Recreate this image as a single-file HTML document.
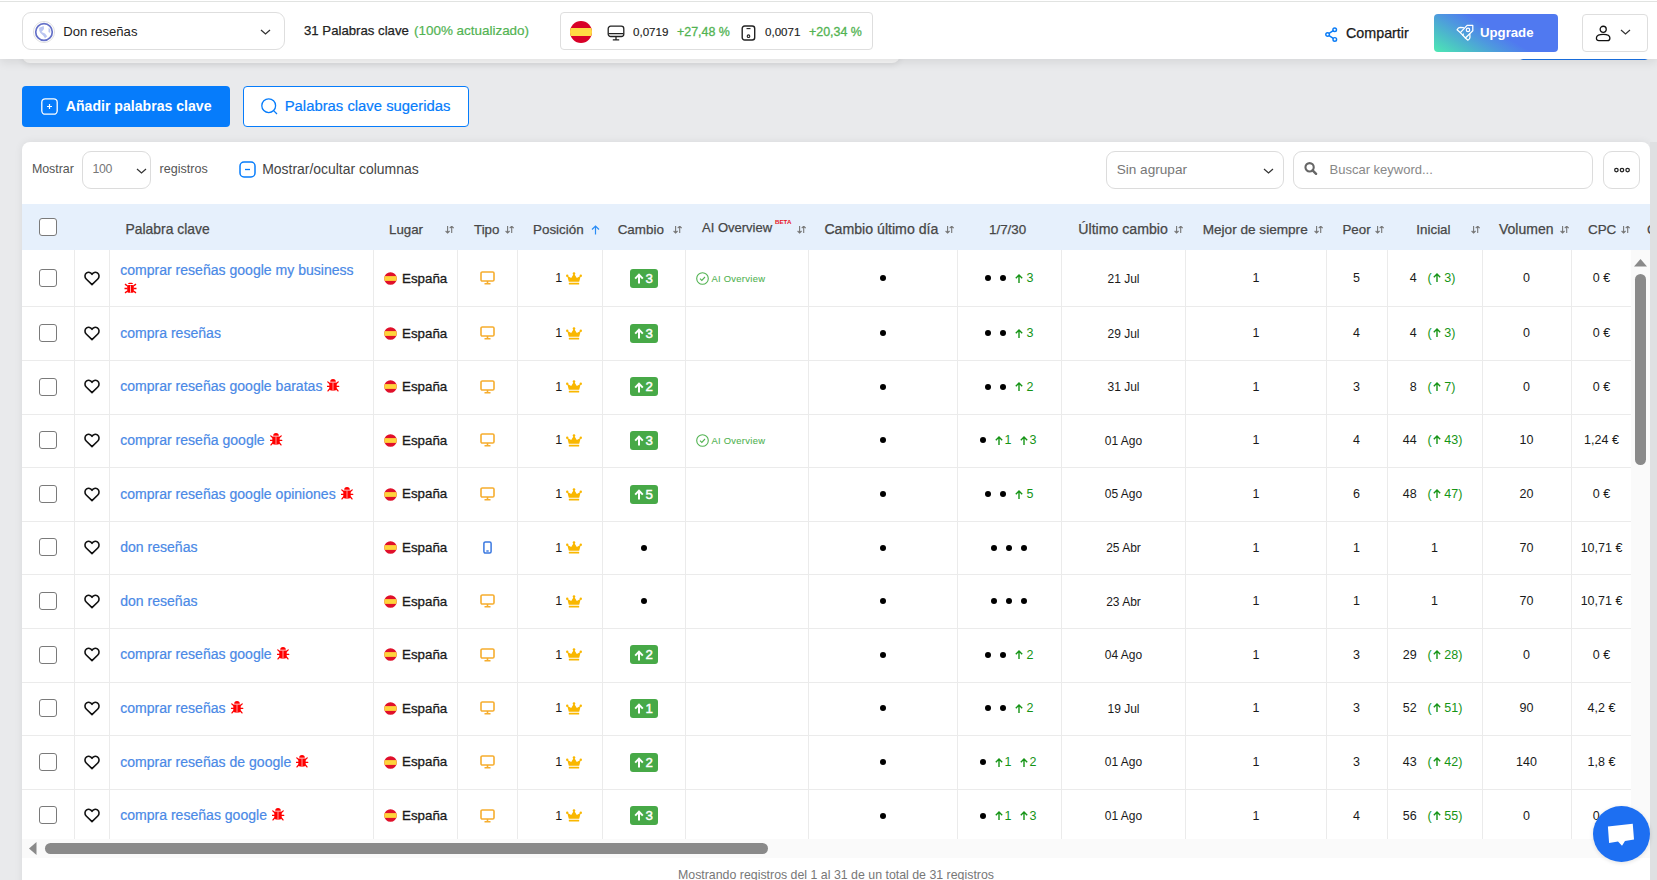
<!DOCTYPE html>
<html><head><meta charset="utf-8"><title>Keywords</title>
<style>
html,body{margin:0;padding:0;}
body{width:1657px;height:880px;overflow:hidden;position:relative;font-family:"Liberation Sans",sans-serif;background:#e9eaec;}
.b{position:absolute;}
.t{position:absolute;white-space:nowrap;line-height:1;}
</style></head><body>
<div class="b" style="left:0px;top:0px;width:1657px;height:880px;background:#e9eaec;"></div>
<div class="b" style="left:22px;top:20px;width:878px;height:43px;background:#f6f6f6;border-radius:0 0 8px 8px;box-shadow:0 2px 6px rgba(0,0,0,.08);"></div>
<div class="b" style="left:1519px;top:20px;width:130px;height:40px;border:1px solid #1a73e8;border-radius:0 0 4px 4px;box-sizing:border-box;"></div>
<div class="b" style="left:0px;top:0px;width:1657px;height:59px;background:#fff;box-shadow:0 3px 10px rgba(0,0,0,.09);"></div>
<div class="b" style="left:0px;top:1px;width:1657px;height:1px;background:#e1e3e1;"></div>
<div class="b" style="left:22px;top:12px;width:263px;height:38px;border:1px solid #dedede;border-radius:9px;box-sizing:border-box;background:#fff;"></div>
<svg class="b" style="left:33px;top:20.5px;" width="22" height="22" viewBox="0 0 22 22"><circle cx="11" cy="11" r="10.6" fill="#fff" stroke="#dedede" stroke-width="0.9"/><circle cx="11" cy="11" r="8.3" fill="#fff" stroke="#6470c8" stroke-width="1.7"/><path d="M6.2 6.7 L10.7 5.1 L11 8 L8.5 10.9 L12 12.5 L14.2 15.3 L12 17.2 L10.4 14.7 L7.2 11.8 L6.2 9.6 Z M15.6 6.8 L17.4 8.5 L17.2 12 L15.5 11 Z" fill="#a9b6ee" opacity="0.8"/></svg>
<div class="t" style="left:63.2px;top:24.91px;font-size:13.1px;color:#222;">Don reseñas</div>
<svg class="b" style="left:260px;top:29px;" width="11" height="6" viewBox="0 0 11 6"><path d="M1 1 L5.5 5 L10 1" fill="none" stroke="#333" stroke-width="1.3"/></svg>
<div class="t" style="left:304px;top:23.72px;font-size:13.2px;color:#222;-webkit-text-stroke:0.25px #222;">31 Palabras clave</div>
<div class="t" style="left:414px;top:23.51px;font-size:13.45px;color:#52b352;-webkit-text-stroke:0.2px #52b352;">(100% actualizado)</div>
<div class="b" style="left:560px;top:12px;width:313px;height:38px;border:1px solid #dedede;border-radius:4px;box-sizing:border-box;background:#fff;"></div>
<svg class="b" style="left:570px;top:21px;" width="22" height="22" viewBox="0 0 22 22"><clipPath id="fc"><circle cx="11" cy="11" r="11"/></clipPath><g clip-path="url(#fc)"><rect width="22" height="22" fill="#d80027"/><rect y="7" width="22" height="8" fill="#ffda44"/></g></svg>
<svg class="b" style="left:607px;top:24.5px;" width="18" height="16" viewBox="0 0 18 16"><rect x="1.2" y="1.2" width="15.6" height="10.3" rx="2.5" fill="none" stroke="#222" stroke-width="1.3"/><path d="M1.5 8.6 H16.5 M9 11.5 V14.5 M5.8 14.8 H12.2" stroke="#222" stroke-width="1.3" fill="none"/></svg>
<div class="t" style="left:633px;top:26.38px;font-size:11.6px;color:#222;-webkit-text-stroke:0.15px #222;">0,0719</div>
<div class="t" style="left:677px;top:26.06px;font-size:12.45px;color:#52b352;-webkit-text-stroke:0.3px #52b352;">+27,48 %</div>
<svg class="b" style="left:740.5px;top:24.5px;" width="15" height="16" viewBox="0 0 15 16"><rect x="1.2" y="1" width="12.5" height="14" rx="2.5" fill="none" stroke="#222" stroke-width="1.4"/><path d="M5.5 3.6 H9.5" stroke="#222" stroke-width="1.1"/><circle cx="7.5" cy="11.2" r="1.3" fill="none" stroke="#222" stroke-width="1.1"/></svg>
<div class="t" style="left:765px;top:26.38px;font-size:11.6px;color:#222;-webkit-text-stroke:0.15px #222;">0,0071</div>
<div class="t" style="left:809px;top:26.06px;font-size:12.45px;color:#52b352;-webkit-text-stroke:0.3px #52b352;">+20,34 %</div>
<svg class="b" style="left:1324px;top:25.5px;" width="14" height="17" viewBox="0 0 14 17"><g fill="none" stroke="#0b7cf6" stroke-width="1.45"><circle cx="10.7" cy="3.7" r="1.8"/><circle cx="3.6" cy="8.5" r="1.8"/><circle cx="10.8" cy="13.4" r="1.8"/><path d="M5.1 7.4 L9.2 4.7 M5.1 9.6 L9.3 12.4"/></g></svg>
<div class="t" style="left:1346px;top:26.39px;font-size:14.3px;color:#1a1a1a;-webkit-text-stroke:0.25px #1a1a1a;">Compartir</div>
<div class="b" style="left:1434px;top:14px;width:124px;height:38px;border-radius:4px;background:linear-gradient(31deg,#4de9b3 0%,#4cbcc9 20%,#4e98df 36%,#5079f0 52%,#5079f0 100%);"></div>
<svg class="b" style="left:1452px;top:20px;" width="28" height="25" viewBox="0 0 28 25"><g fill="none" stroke="#fff" stroke-width="1.25" stroke-linejoin="round" stroke-linecap="round"><path d="M15.1 5.4 L20.8 5.4 L20.8 10.8 L13.4 18 L8.3 12.6 Z"/><path d="M11.4 7.6 L8.2 7.4 C6.9 7.4 5.8 8.2 5.1 9.8 L8.3 12.6"/><path d="M17.8 14 L18 17.2 C18 18.6 17.1 19.6 15.9 20.2 L13.4 18"/><circle cx="16" cy="9.9" r="1.7"/><path d="M11.3 14 L10.9 15.3"/></g></svg>
<div class="t" style="left:1480px;top:25.72px;font-size:13.2px;color:#fff;font-weight:700;">Upgrade</div>
<div class="b" style="left:1582px;top:14px;width:66px;height:38px;border:1px solid #dedede;border-radius:4px;box-sizing:border-box;background:#fff;"></div>
<svg class="b" style="left:1595px;top:25px;" width="16" height="17" viewBox="0 0 16 17"><circle cx="8.2" cy="4.3" r="3.05" fill="none" stroke="#111" stroke-width="1.3"/><path d="M1.4 12.9 C1.4 10.2 4.5 9.3 8.2 9.3 C11.9 9.3 14.9 10.2 14.9 12.9 C14.9 14.8 13.8 15.6 12.5 15.6 H3.8 C2.5 15.6 1.4 14.8 1.4 12.9 Z" fill="none" stroke="#111" stroke-width="1.3"/></svg>
<svg class="b" style="left:1620px;top:29px;" width="11" height="6" viewBox="0 0 11 6"><path d="M1 1 L5.5 5 L10 1" fill="none" stroke="#333" stroke-width="1.2"/></svg>
<div class="b" style="left:22px;top:86px;width:208px;height:41px;background:#067cfb;border-radius:4px;"></div>
<svg class="b" style="left:40.5px;top:97.5px;" width="17" height="17" viewBox="0 0 17 17"><rect x="0.8" y="0.8" width="15.4" height="15.4" rx="3.5" fill="none" stroke="#fff" stroke-width="1.3"/><path d="M8.5 6 V11 M6 8.5 H11" stroke="#fff" stroke-width="1.2"/></svg>
<div class="t" style="left:65.8px;top:99.06px;font-size:14.1px;color:#fff;font-weight:700;">Añadir palabras clave</div>
<div class="b" style="left:243px;top:86px;width:226px;height:41px;background:#fff;border:1px solid #067cfb;border-radius:4px;box-sizing:border-box;"></div>
<svg class="b" style="left:260.5px;top:97.5px;" width="17" height="17" viewBox="0 0 17 17"><circle cx="7.7" cy="7.7" r="6.9" fill="none" stroke="#067cfb" stroke-width="1.3"/><path d="M12.6 12.6 L16 16" stroke="#067cfb" stroke-width="1.3"/></svg>
<div class="t" style="left:284.7px;top:99.43px;font-size:14.85px;color:#067cfb;-webkit-text-stroke:0.2px #067cfb;">Palabras clave sugeridas</div>
<div class="b" style="left:22px;top:142px;width:1628px;height:760px;background:#fff;border-radius:8px;box-shadow:0 0 9px rgba(0,0,0,.07);"></div>
<div class="b" style="left:1650px;top:142px;width:7px;height:738px;background:#dfe0e2;"></div>
<div class="t" style="left:31.9px;top:163.00px;font-size:12.4px;color:#555;">Mostrar</div>
<div class="b" style="left:82px;top:151px;width:69px;height:38px;border:1px solid #dcdcdc;border-radius:9px;box-sizing:border-box;"></div>
<div class="t" style="left:92.5px;top:163.39px;font-size:12.3px;color:#777;letter-spacing:-0.3px;">100</div>
<svg class="b" style="left:135.5px;top:168px;" width="11" height="6" viewBox="0 0 11 6"><path d="M1 1 L5.5 5 L10 1" fill="none" stroke="#333" stroke-width="1.2"/></svg>
<div class="t" style="left:159.6px;top:162.87px;font-size:12.55px;color:#555;">registros</div>
<svg class="b" style="left:238.5px;top:160.5px;" width="17" height="17" viewBox="0 0 17 17"><rect x="1" y="1" width="15" height="15" rx="4" fill="none" stroke="#067cfb" stroke-width="1.5"/><path d="M6 8.5 H11" stroke="#067cfb" stroke-width="1.3"/></svg>
<div class="t" style="left:262.2px;top:162.59px;font-size:13.95px;color:#444;">Mostrar/ocultar columnas</div>
<div class="b" style="left:1106px;top:151px;width:178px;height:38px;border:1px solid #dcdcdc;border-radius:9px;box-sizing:border-box;"></div>
<div class="t" style="left:1116.7px;top:163.48px;font-size:13.6px;color:#777;">Sin agrupar</div>
<svg class="b" style="left:1262.5px;top:168px;" width="11" height="6" viewBox="0 0 11 6"><path d="M1 1 L5.5 5 L10 1" fill="none" stroke="#333" stroke-width="1.2"/></svg>
<div class="b" style="left:1293px;top:151px;width:300px;height:38px;border:1px solid #dcdcdc;border-radius:9px;box-sizing:border-box;"></div>
<svg class="b" style="left:1303.5px;top:161.5px;" width="14" height="14" viewBox="0 0 14 14"><circle cx="5.6" cy="5.3" r="4.15" fill="none" stroke="#666" stroke-width="2.1"/><path d="M8.6 8.3 L12.1 11.8" stroke="#666" stroke-width="2.4" stroke-linecap="round"/></svg>
<div class="t" style="left:1329.5px;top:162.99px;font-size:13.0px;color:#888;">Buscar keyword...</div>
<div class="b" style="left:1603px;top:151px;width:37px;height:38px;border:1px solid #dcdcdc;border-radius:9px;box-sizing:border-box;"></div>
<svg class="b" style="left:1614px;top:166.5px;" width="16" height="6" viewBox="0 0 16 6"><circle cx="2.4" cy="3" r="1.75" fill="none" stroke="#222" stroke-width="1.25"/><circle cx="8.0" cy="3" r="1.75" fill="none" stroke="#222" stroke-width="1.25"/><circle cx="13.6" cy="3" r="1.75" fill="none" stroke="#222" stroke-width="1.25"/></svg>
<div class="b" style="left:22px;top:204px;width:1628px;height:46px;background:#e6f0fc;"></div>
<div class="b" style="left:39px;top:218px;width:18px;height:18px;border:1.5px solid #7a7a7a;border-radius:3px;box-sizing:border-box;background:#fff;"></div>
<div class="t" style="left:125.5px;top:222.53px;font-size:13.9px;color:#474747;-webkit-text-stroke:0.25px #474747;">Palabra clave</div>
<div class="t" style="left:389px;top:223.04px;font-size:13.3px;color:#474747;-webkit-text-stroke:0.25px #474747;">Lugar</div>
<svg class="b" style="left:444.5px;top:226px;" width="10" height="8" viewBox="0 0 10 8"><path d="M2.6 0 V7 M0.6 5 L2.6 7 L4.6 5 M6.7 7 V0.2 M4.7 2.2 L6.7 0.2 L8.7 2.2" fill="none" stroke="#777" stroke-width="1.1"/></svg>
<div class="t" style="left:474px;top:223.04px;font-size:13.3px;color:#474747;-webkit-text-stroke:0.25px #474747;">Tipo</div>
<svg class="b" style="left:504.5px;top:226px;" width="10" height="8" viewBox="0 0 10 8"><path d="M2.6 0 V7 M0.6 5 L2.6 7 L4.6 5 M6.7 7 V0.2 M4.7 2.2 L6.7 0.2 L8.7 2.2" fill="none" stroke="#777" stroke-width="1.1"/></svg>
<div class="t" style="left:533px;top:222.95px;font-size:13.4px;color:#474747;-webkit-text-stroke:0.25px #474747;">Posición</div>
<svg class="b" style="left:591px;top:224.5px;" width="9" height="10" viewBox="0 0 9 10"><path d="M4.5 9.5 V1 M1 4.5 L4.5 1 L8 4.5" fill="none" stroke="#2a8cf5" stroke-width="1.2"/></svg>
<div class="t" style="left:617.7px;top:222.95px;font-size:13.4px;color:#474747;-webkit-text-stroke:0.25px #474747;">Cambio</div>
<svg class="b" style="left:673px;top:226px;" width="10" height="8" viewBox="0 0 10 8"><path d="M2.6 0 V7 M0.6 5 L2.6 7 L4.6 5 M6.7 7 V0.2 M4.7 2.2 L6.7 0.2 L8.7 2.2" fill="none" stroke="#777" stroke-width="1.1"/></svg>
<div class="t" style="left:702px;top:221.19px;font-size:13.0px;color:#474747;-webkit-text-stroke:0.25px #474747;">AI Overview</div>
<div class="t" style="left:775px;top:219.05px;font-size:6.2px;color:#e8141c;font-weight:700;">BETA</div>
<svg class="b" style="left:796.5px;top:226px;" width="10" height="8" viewBox="0 0 10 8"><path d="M2.6 0 V7 M0.6 5 L2.6 7 L4.6 5 M6.7 7 V0.2 M4.7 2.2 L6.7 0.2 L8.7 2.2" fill="none" stroke="#777" stroke-width="1.1"/></svg>
<div class="t" style="left:824.4px;top:222.32px;font-size:14.15px;color:#474747;-webkit-text-stroke:0.25px #474747;">Cambio último día</div>
<svg class="b" style="left:945px;top:226px;" width="10" height="8" viewBox="0 0 10 8"><path d="M2.6 0 V7 M0.6 5 L2.6 7 L4.6 5 M6.7 7 V0.2 M4.7 2.2 L6.7 0.2 L8.7 2.2" fill="none" stroke="#777" stroke-width="1.1"/></svg>
<div class="t" style="left:989px;top:222.95px;font-size:13.4px;color:#474747;-webkit-text-stroke:0.25px #474747;">1/7/30</div>
<div class="t" style="left:1078.3px;top:222.32px;font-size:14.15px;color:#474747;-webkit-text-stroke:0.25px #474747;">Último cambio</div>
<svg class="b" style="left:1174px;top:226px;" width="10" height="8" viewBox="0 0 10 8"><path d="M2.6 0 V7 M0.6 5 L2.6 7 L4.6 5 M6.7 7 V0.2 M4.7 2.2 L6.7 0.2 L8.7 2.2" fill="none" stroke="#777" stroke-width="1.1"/></svg>
<div class="t" style="left:1202.7px;top:222.78px;font-size:13.6px;color:#474747;-webkit-text-stroke:0.25px #474747;">Mejor de siempre</div>
<svg class="b" style="left:1314px;top:226px;" width="10" height="8" viewBox="0 0 10 8"><path d="M2.6 0 V7 M0.6 5 L2.6 7 L4.6 5 M6.7 7 V0.2 M4.7 2.2 L6.7 0.2 L8.7 2.2" fill="none" stroke="#777" stroke-width="1.1"/></svg>
<div class="t" style="left:1342.5px;top:223.04px;font-size:13.3px;color:#474747;-webkit-text-stroke:0.25px #474747;">Peor</div>
<svg class="b" style="left:1375px;top:226px;" width="10" height="8" viewBox="0 0 10 8"><path d="M2.6 0 V7 M0.6 5 L2.6 7 L4.6 5 M6.7 7 V0.2 M4.7 2.2 L6.7 0.2 L8.7 2.2" fill="none" stroke="#777" stroke-width="1.1"/></svg>
<div class="t" style="left:1416.3px;top:222.95px;font-size:13.4px;color:#474747;-webkit-text-stroke:0.25px #474747;">Inicial</div>
<svg class="b" style="left:1471px;top:226px;" width="10" height="8" viewBox="0 0 10 8"><path d="M2.6 0 V7 M0.6 5 L2.6 7 L4.6 5 M6.7 7 V0.2 M4.7 2.2 L6.7 0.2 L8.7 2.2" fill="none" stroke="#777" stroke-width="1.1"/></svg>
<div class="t" style="left:1499px;top:222.45px;font-size:14.0px;color:#474747;-webkit-text-stroke:0.25px #474747;">Volumen</div>
<svg class="b" style="left:1560px;top:226px;" width="10" height="8" viewBox="0 0 10 8"><path d="M2.6 0 V7 M0.6 5 L2.6 7 L4.6 5 M6.7 7 V0.2 M4.7 2.2 L6.7 0.2 L8.7 2.2" fill="none" stroke="#777" stroke-width="1.1"/></svg>
<div class="t" style="left:1588px;top:222.95px;font-size:13.4px;color:#474747;-webkit-text-stroke:0.25px #474747;">CPC</div>
<svg class="b" style="left:1620.5px;top:226px;" width="10" height="8" viewBox="0 0 10 8"><path d="M2.6 0 V7 M0.6 5 L2.6 7 L4.6 5 M6.7 7 V0.2 M4.7 2.2 L6.7 0.2 L8.7 2.2" fill="none" stroke="#777" stroke-width="1.1"/></svg>
<div class="b" style="left:1640px;top:204px;width:10px;height:46px;overflow:hidden;">
<div class="t" style="left:7px;top:18.95px;font-size:13.4px;color:#474747;-webkit-text-stroke:0.25px #474747;">C</div>
</div>
<div class="b" style="left:0px;top:0px;width:1631px;height:839px;overflow:hidden;">
<div class="b" style="left:22px;top:306px;width:1609px;height:1px;background:#ebebeb;"></div>
<div class="b" style="left:22px;top:360px;width:1609px;height:1px;background:#ebebeb;"></div>
<div class="b" style="left:22px;top:414px;width:1609px;height:1px;background:#ebebeb;"></div>
<div class="b" style="left:22px;top:467px;width:1609px;height:1px;background:#ebebeb;"></div>
<div class="b" style="left:22px;top:521px;width:1609px;height:1px;background:#ebebeb;"></div>
<div class="b" style="left:22px;top:574px;width:1609px;height:1px;background:#ebebeb;"></div>
<div class="b" style="left:22px;top:628px;width:1609px;height:1px;background:#ebebeb;"></div>
<div class="b" style="left:22px;top:682px;width:1609px;height:1px;background:#ebebeb;"></div>
<div class="b" style="left:22px;top:735px;width:1609px;height:1px;background:#ebebeb;"></div>
<div class="b" style="left:22px;top:789px;width:1609px;height:1px;background:#ebebeb;"></div>
<div class="b" style="left:74px;top:250px;width:1px;height:600px;background:#ebebeb;"></div>
<div class="b" style="left:109px;top:250px;width:1px;height:600px;background:#ebebeb;"></div>
<div class="b" style="left:373px;top:250px;width:1px;height:600px;background:#ebebeb;"></div>
<div class="b" style="left:457px;top:250px;width:1px;height:600px;background:#ebebeb;"></div>
<div class="b" style="left:517px;top:250px;width:1px;height:600px;background:#ebebeb;"></div>
<div class="b" style="left:602px;top:250px;width:1px;height:600px;background:#ebebeb;"></div>
<div class="b" style="left:685px;top:250px;width:1px;height:600px;background:#ebebeb;"></div>
<div class="b" style="left:808px;top:250px;width:1px;height:600px;background:#ebebeb;"></div>
<div class="b" style="left:957px;top:250px;width:1px;height:600px;background:#ebebeb;"></div>
<div class="b" style="left:1061px;top:250px;width:1px;height:600px;background:#ebebeb;"></div>
<div class="b" style="left:1185px;top:250px;width:1px;height:600px;background:#ebebeb;"></div>
<div class="b" style="left:1326px;top:250px;width:1px;height:600px;background:#ebebeb;"></div>
<div class="b" style="left:1387px;top:250px;width:1px;height:600px;background:#ebebeb;"></div>
<div class="b" style="left:1482px;top:250px;width:1px;height:600px;background:#ebebeb;"></div>
<div class="b" style="left:1571px;top:250px;width:1px;height:600px;background:#ebebeb;"></div>
<div class="b" style="left:39.2px;top:269.2px;width:18px;height:18px;border:1.5px solid #7a7a7a;border-radius:3px;box-sizing:border-box;background:#fff;"></div>
<svg class="b" style="left:84px;top:270.9px;" width="16" height="15" viewBox="0 0 16 15"><path d="M8 13.6 L2.2 8 C0.4 6.2 0.6 3.2 2.6 1.9 C4.6 0.6 6.8 1.4 8 3.3 C9.2 1.4 11.4 0.6 13.4 1.9 C15.4 3.2 15.6 6.2 13.8 8 Z" fill="none" stroke="#111" stroke-width="1.6" stroke-linejoin="round"/></svg>
<div class="t" style="left:120.2px;top:262.90px;font-size:14.05px;color:#4a89e6;-webkit-text-stroke:0.2px #4a89e6;">comprar reseñas google my business</div>
<svg class="b" style="left:124px;top:281px;" width="13" height="13" viewBox="0 0 13 13"><path d="M4 3 C4 1.3 9 1.3 9 3 Z" fill="#f00"/><rect x="3.2" y="3.9" width="6.6" height="7.8" rx="1.5" fill="#f00"/><path d="M1 3.2 L3.6 5 M12 3.2 L9.4 5 M0.5 7.5 H3.4 M12.5 7.5 H9.6 M1 11.8 L3.6 10 M12 11.8 L9.4 10" stroke="#f00" stroke-width="1.4"/><path d="M6.5 4.5 V11.5" stroke="#fff" stroke-width="0.7"/></svg>
<svg class="b" style="left:383.5px;top:271.9px;" width="13" height="13" viewBox="0 0 13 13"><clipPath id="ff1"><circle cx="6.5" cy="6.5" r="6.3"/></clipPath><g clip-path="url(#ff1)"><rect width="13" height="13" fill="#e0102a"/><rect y="4.1" width="13" height="4.8" fill="#ffd43b"/></g></svg>
<div class="t" style="left:402px;top:271.70px;font-size:13.35px;color:#1a1a1a;-webkit-text-stroke:0.3px #1a1a1a;">España</div>
<svg class="b" style="left:479.5px;top:271.4px;" width="15" height="14" viewBox="0 0 15 14"><rect x="1" y="1" width="13" height="9" rx="1.3" fill="none" stroke="#f6ad2e" stroke-width="1.6"/><path d="M7.5 10 V12.5 M4.5 12.8 H10.5" stroke="#f6ad2e" stroke-width="1.6"/></svg>
<div class="t" style="left:555.3px;top:272.42px;font-size:12.5px;color:#1a1a1a;">1</div>
<svg class="b" style="left:566px;top:271.9px;" width="16" height="13" viewBox="0 0 16 13"><path d="M8 1.5 L10.8 6 L14.8 3.8 L13.2 9.8 H2.8 L1.2 3.8 L5.2 6 Z" fill="#f9b700"/><circle cx="8" cy="1.6" r="1.3" fill="#f9b700"/><circle cx="1.2" cy="3.8" r="1.2" fill="#f9b700"/><circle cx="14.8" cy="3.8" r="1.2" fill="#f9b700"/><rect x="2.8" y="10.7" width="10.4" height="1.8" rx="0.6" fill="#f9b700"/></svg>
<div class="b" style="left:630px;top:268.9px;width:28px;height:19px;background:#47a947;border-radius:3px;"></div>
<svg class="b" style="left:633.5px;top:273.09999999999997px;" width="10" height="11" viewBox="0 0 10 11"><path d="M5 10.5 V2 M1.2 5.6 L5 1.6 L8.8 5.6" fill="none" stroke="#fff" stroke-width="2"/></svg>
<div class="t" style="left:645.5px;top:271.94px;font-size:13.3px;color:#fff;-webkit-text-stroke:0.45px #fff;">3</div>
<svg class="b" style="left:695.5px;top:271.9px;" width="13" height="13" viewBox="0 0 13 13"><circle cx="6.5" cy="6.5" r="5.8" fill="none" stroke="#52b352" stroke-width="1.1"/><path d="M4 6.7 L5.8 8.4 L9 5" fill="none" stroke="#52b352" stroke-width="1.1"/></svg>
<div class="t" style="left:711.4px;top:274.14px;font-size:9.4px;color:#52b352;-webkit-text-stroke:0.1px #52b352;letter-spacing:0.3px;">AI Overview</div>
<div class="b" style="left:880px;top:275.4px;width:6px;height:6px;background:#000;border-radius:50%;"></div>
<div class="b" style="left:985px;top:275.4px;width:6px;height:6px;background:#000;border-radius:50%;"></div>
<div class="b" style="left:1000px;top:275.4px;width:6px;height:6px;background:#000;border-radius:50%;"></div>
<svg class="b" style="left:1014.5px;top:273.9px;" width="8" height="9" viewBox="0 0 8 9"><path d="M4 9 V1.2 M0.8 4.2 L4 1 L7.2 4.2" fill="none" stroke="#159415" stroke-width="1.4"/></svg>
<div class="t" style="left:1026.5px;top:272.42px;font-size:12.5px;color:#159415;">3</div>
<div class="t" style="left:923.5px;width:400px;text-align:center;top:272.84px;font-size:12.0px;color:#1a1a1a;">21 Jul</div>
<div class="t" style="left:1056px;width:400px;text-align:center;top:272.42px;font-size:12.5px;color:#1a1a1a;">1</div>
<div class="t" style="left:1156.5px;width:400px;text-align:center;top:272.42px;font-size:12.5px;color:#1a1a1a;">5</div>
<div class="t" style="left:1332.5px;width:200px;text-align:center;top:272.42px;font-size:12.5px;color:#1a1a1a;">4<span style="display:inline-block;width:11px"></span><span style="color:#159415">(<span style="display:inline-block;width:9px;height:9px;position:relative;"><svg style="position:absolute;left:1px;top:0px" width="8" height="9" viewBox="0 0 8 9"><path d="M4 9 V1.2 M0.8 4.2 L4 1 L7.2 4.2" fill="none" stroke="#159415" stroke-width="1.4"/></svg></span>&nbsp;3)</span></div>
<div class="t" style="left:1326.5px;width:400px;text-align:center;top:272.42px;font-size:12.5px;color:#1a1a1a;">0</div>
<div class="t" style="left:1401.5px;width:400px;text-align:center;top:272.42px;font-size:12.5px;color:#1a1a1a;">0 €</div>
<div class="b" style="left:39.2px;top:324.0px;width:18px;height:18px;border:1.5px solid #7a7a7a;border-radius:3px;box-sizing:border-box;background:#fff;"></div>
<svg class="b" style="left:84px;top:325.7px;" width="16" height="15" viewBox="0 0 16 15"><path d="M8 13.6 L2.2 8 C0.4 6.2 0.6 3.2 2.6 1.9 C4.6 0.6 6.8 1.4 8 3.3 C9.2 1.4 11.4 0.6 13.4 1.9 C15.4 3.2 15.6 6.2 13.8 8 Z" fill="none" stroke="#111" stroke-width="1.6" stroke-linejoin="round"/></svg>
<div class="t" style="left:120.2px;top:325.70px;font-size:14.05px;color:#4a89e6;-webkit-text-stroke:0.2px #4a89e6;">compra reseñas</div>
<svg class="b" style="left:383.5px;top:326.7px;" width="13" height="13" viewBox="0 0 13 13"><clipPath id="ff2"><circle cx="6.5" cy="6.5" r="6.3"/></clipPath><g clip-path="url(#ff2)"><rect width="13" height="13" fill="#e0102a"/><rect y="4.1" width="13" height="4.8" fill="#ffd43b"/></g></svg>
<div class="t" style="left:402px;top:326.50px;font-size:13.35px;color:#1a1a1a;-webkit-text-stroke:0.3px #1a1a1a;">España</div>
<svg class="b" style="left:479.5px;top:326.2px;" width="15" height="14" viewBox="0 0 15 14"><rect x="1" y="1" width="13" height="9" rx="1.3" fill="none" stroke="#f6ad2e" stroke-width="1.6"/><path d="M7.5 10 V12.5 M4.5 12.8 H10.5" stroke="#f6ad2e" stroke-width="1.6"/></svg>
<div class="t" style="left:555.3px;top:327.22px;font-size:12.5px;color:#1a1a1a;">1</div>
<svg class="b" style="left:566px;top:326.7px;" width="16" height="13" viewBox="0 0 16 13"><path d="M8 1.5 L10.8 6 L14.8 3.8 L13.2 9.8 H2.8 L1.2 3.8 L5.2 6 Z" fill="#f9b700"/><circle cx="8" cy="1.6" r="1.3" fill="#f9b700"/><circle cx="1.2" cy="3.8" r="1.2" fill="#f9b700"/><circle cx="14.8" cy="3.8" r="1.2" fill="#f9b700"/><rect x="2.8" y="10.7" width="10.4" height="1.8" rx="0.6" fill="#f9b700"/></svg>
<div class="b" style="left:630px;top:323.7px;width:28px;height:19px;background:#47a947;border-radius:3px;"></div>
<svg class="b" style="left:633.5px;top:327.9px;" width="10" height="11" viewBox="0 0 10 11"><path d="M5 10.5 V2 M1.2 5.6 L5 1.6 L8.8 5.6" fill="none" stroke="#fff" stroke-width="2"/></svg>
<div class="t" style="left:645.5px;top:326.74px;font-size:13.3px;color:#fff;-webkit-text-stroke:0.45px #fff;">3</div>
<div class="b" style="left:880px;top:330.2px;width:6px;height:6px;background:#000;border-radius:50%;"></div>
<div class="b" style="left:985px;top:330.2px;width:6px;height:6px;background:#000;border-radius:50%;"></div>
<div class="b" style="left:1000px;top:330.2px;width:6px;height:6px;background:#000;border-radius:50%;"></div>
<svg class="b" style="left:1014.5px;top:328.7px;" width="8" height="9" viewBox="0 0 8 9"><path d="M4 9 V1.2 M0.8 4.2 L4 1 L7.2 4.2" fill="none" stroke="#159415" stroke-width="1.4"/></svg>
<div class="t" style="left:1026.5px;top:327.22px;font-size:12.5px;color:#159415;">3</div>
<div class="t" style="left:923.5px;width:400px;text-align:center;top:327.64px;font-size:12.0px;color:#1a1a1a;">29 Jul</div>
<div class="t" style="left:1056px;width:400px;text-align:center;top:327.22px;font-size:12.5px;color:#1a1a1a;">1</div>
<div class="t" style="left:1156.5px;width:400px;text-align:center;top:327.22px;font-size:12.5px;color:#1a1a1a;">4</div>
<div class="t" style="left:1332.5px;width:200px;text-align:center;top:327.22px;font-size:12.5px;color:#1a1a1a;">4<span style="display:inline-block;width:11px"></span><span style="color:#159415">(<span style="display:inline-block;width:9px;height:9px;position:relative;"><svg style="position:absolute;left:1px;top:0px" width="8" height="9" viewBox="0 0 8 9"><path d="M4 9 V1.2 M0.8 4.2 L4 1 L7.2 4.2" fill="none" stroke="#159415" stroke-width="1.4"/></svg></span>&nbsp;3)</span></div>
<div class="t" style="left:1326.5px;width:400px;text-align:center;top:327.22px;font-size:12.5px;color:#1a1a1a;">0</div>
<div class="t" style="left:1401.5px;width:400px;text-align:center;top:327.22px;font-size:12.5px;color:#1a1a1a;">0 €</div>
<div class="b" style="left:39.2px;top:377.6px;width:18px;height:18px;border:1.5px solid #7a7a7a;border-radius:3px;box-sizing:border-box;background:#fff;"></div>
<svg class="b" style="left:84px;top:379.3px;" width="16" height="15" viewBox="0 0 16 15"><path d="M8 13.6 L2.2 8 C0.4 6.2 0.6 3.2 2.6 1.9 C4.6 0.6 6.8 1.4 8 3.3 C9.2 1.4 11.4 0.6 13.4 1.9 C15.4 3.2 15.6 6.2 13.8 8 Z" fill="none" stroke="#111" stroke-width="1.6" stroke-linejoin="round"/></svg>
<div class="t" style="left:120.2px;top:379.30px;font-size:14.05px;color:#4a89e6;-webkit-text-stroke:0.2px #4a89e6;">comprar reseñas google baratas<svg style="display:inline-block;vertical-align:-1px;margin-left:5px;-webkit-text-stroke:0" width="13" height="13" viewBox="0 0 13 13"><path d="M3.2 2.7 A2.8 2.7 0 0 1 8.8 2.7 Z" fill="#f00"/><path d="M2.3 3.4 H9.7 V9.8 C9.7 11 8.6 11.8 6 11.8 C3.4 11.8 2.3 11 2.3 9.8 Z" fill="#f00"/><path d="M2.6 4.6 L0.8 2.9 M9.4 4.6 L11.2 2.9 M2.5 7.3 H0.2 M9.5 7.3 H11.8 M2.6 10 L1 11.9 M9.4 10 L11 11.9" stroke="#f00" stroke-width="1.3" stroke-linecap="round"/><path d="M6 3.6 V11.6" stroke="#fff" stroke-width="0.6"/></svg></div>
<svg class="b" style="left:383.5px;top:380.3px;" width="13" height="13" viewBox="0 0 13 13"><clipPath id="ff3"><circle cx="6.5" cy="6.5" r="6.3"/></clipPath><g clip-path="url(#ff3)"><rect width="13" height="13" fill="#e0102a"/><rect y="4.1" width="13" height="4.8" fill="#ffd43b"/></g></svg>
<div class="t" style="left:402px;top:380.10px;font-size:13.35px;color:#1a1a1a;-webkit-text-stroke:0.3px #1a1a1a;">España</div>
<svg class="b" style="left:479.5px;top:379.8px;" width="15" height="14" viewBox="0 0 15 14"><rect x="1" y="1" width="13" height="9" rx="1.3" fill="none" stroke="#f6ad2e" stroke-width="1.6"/><path d="M7.5 10 V12.5 M4.5 12.8 H10.5" stroke="#f6ad2e" stroke-width="1.6"/></svg>
<div class="t" style="left:555.3px;top:380.82px;font-size:12.5px;color:#1a1a1a;">1</div>
<svg class="b" style="left:566px;top:380.3px;" width="16" height="13" viewBox="0 0 16 13"><path d="M8 1.5 L10.8 6 L14.8 3.8 L13.2 9.8 H2.8 L1.2 3.8 L5.2 6 Z" fill="#f9b700"/><circle cx="8" cy="1.6" r="1.3" fill="#f9b700"/><circle cx="1.2" cy="3.8" r="1.2" fill="#f9b700"/><circle cx="14.8" cy="3.8" r="1.2" fill="#f9b700"/><rect x="2.8" y="10.7" width="10.4" height="1.8" rx="0.6" fill="#f9b700"/></svg>
<div class="b" style="left:630px;top:377.3px;width:28px;height:19px;background:#47a947;border-radius:3px;"></div>
<svg class="b" style="left:633.5px;top:381.5px;" width="10" height="11" viewBox="0 0 10 11"><path d="M5 10.5 V2 M1.2 5.6 L5 1.6 L8.8 5.6" fill="none" stroke="#fff" stroke-width="2"/></svg>
<div class="t" style="left:645.5px;top:380.34px;font-size:13.3px;color:#fff;-webkit-text-stroke:0.45px #fff;">2</div>
<div class="b" style="left:880px;top:383.8px;width:6px;height:6px;background:#000;border-radius:50%;"></div>
<div class="b" style="left:985px;top:383.8px;width:6px;height:6px;background:#000;border-radius:50%;"></div>
<div class="b" style="left:1000px;top:383.8px;width:6px;height:6px;background:#000;border-radius:50%;"></div>
<svg class="b" style="left:1014.5px;top:382.3px;" width="8" height="9" viewBox="0 0 8 9"><path d="M4 9 V1.2 M0.8 4.2 L4 1 L7.2 4.2" fill="none" stroke="#159415" stroke-width="1.4"/></svg>
<div class="t" style="left:1026.5px;top:380.82px;font-size:12.5px;color:#159415;">2</div>
<div class="t" style="left:923.5px;width:400px;text-align:center;top:381.24px;font-size:12.0px;color:#1a1a1a;">31 Jul</div>
<div class="t" style="left:1056px;width:400px;text-align:center;top:380.82px;font-size:12.5px;color:#1a1a1a;">1</div>
<div class="t" style="left:1156.5px;width:400px;text-align:center;top:380.82px;font-size:12.5px;color:#1a1a1a;">3</div>
<div class="t" style="left:1332.5px;width:200px;text-align:center;top:380.82px;font-size:12.5px;color:#1a1a1a;">8<span style="display:inline-block;width:11px"></span><span style="color:#159415">(<span style="display:inline-block;width:9px;height:9px;position:relative;"><svg style="position:absolute;left:1px;top:0px" width="8" height="9" viewBox="0 0 8 9"><path d="M4 9 V1.2 M0.8 4.2 L4 1 L7.2 4.2" fill="none" stroke="#159415" stroke-width="1.4"/></svg></span>&nbsp;7)</span></div>
<div class="t" style="left:1326.5px;width:400px;text-align:center;top:380.82px;font-size:12.5px;color:#1a1a1a;">0</div>
<div class="t" style="left:1401.5px;width:400px;text-align:center;top:380.82px;font-size:12.5px;color:#1a1a1a;">0 €</div>
<div class="b" style="left:39.2px;top:431.2px;width:18px;height:18px;border:1.5px solid #7a7a7a;border-radius:3px;box-sizing:border-box;background:#fff;"></div>
<svg class="b" style="left:84px;top:432.9px;" width="16" height="15" viewBox="0 0 16 15"><path d="M8 13.6 L2.2 8 C0.4 6.2 0.6 3.2 2.6 1.9 C4.6 0.6 6.8 1.4 8 3.3 C9.2 1.4 11.4 0.6 13.4 1.9 C15.4 3.2 15.6 6.2 13.8 8 Z" fill="none" stroke="#111" stroke-width="1.6" stroke-linejoin="round"/></svg>
<div class="t" style="left:120.2px;top:432.90px;font-size:14.05px;color:#4a89e6;-webkit-text-stroke:0.2px #4a89e6;">comprar reseña google<svg style="display:inline-block;vertical-align:-1px;margin-left:5px;-webkit-text-stroke:0" width="13" height="13" viewBox="0 0 13 13"><path d="M3.2 2.7 A2.8 2.7 0 0 1 8.8 2.7 Z" fill="#f00"/><path d="M2.3 3.4 H9.7 V9.8 C9.7 11 8.6 11.8 6 11.8 C3.4 11.8 2.3 11 2.3 9.8 Z" fill="#f00"/><path d="M2.6 4.6 L0.8 2.9 M9.4 4.6 L11.2 2.9 M2.5 7.3 H0.2 M9.5 7.3 H11.8 M2.6 10 L1 11.9 M9.4 10 L11 11.9" stroke="#f00" stroke-width="1.3" stroke-linecap="round"/><path d="M6 3.6 V11.6" stroke="#fff" stroke-width="0.6"/></svg></div>
<svg class="b" style="left:383.5px;top:433.9px;" width="13" height="13" viewBox="0 0 13 13"><clipPath id="ff4"><circle cx="6.5" cy="6.5" r="6.3"/></clipPath><g clip-path="url(#ff4)"><rect width="13" height="13" fill="#e0102a"/><rect y="4.1" width="13" height="4.8" fill="#ffd43b"/></g></svg>
<div class="t" style="left:402px;top:433.70px;font-size:13.35px;color:#1a1a1a;-webkit-text-stroke:0.3px #1a1a1a;">España</div>
<svg class="b" style="left:479.5px;top:433.4px;" width="15" height="14" viewBox="0 0 15 14"><rect x="1" y="1" width="13" height="9" rx="1.3" fill="none" stroke="#f6ad2e" stroke-width="1.6"/><path d="M7.5 10 V12.5 M4.5 12.8 H10.5" stroke="#f6ad2e" stroke-width="1.6"/></svg>
<div class="t" style="left:555.3px;top:434.42px;font-size:12.5px;color:#1a1a1a;">1</div>
<svg class="b" style="left:566px;top:433.9px;" width="16" height="13" viewBox="0 0 16 13"><path d="M8 1.5 L10.8 6 L14.8 3.8 L13.2 9.8 H2.8 L1.2 3.8 L5.2 6 Z" fill="#f9b700"/><circle cx="8" cy="1.6" r="1.3" fill="#f9b700"/><circle cx="1.2" cy="3.8" r="1.2" fill="#f9b700"/><circle cx="14.8" cy="3.8" r="1.2" fill="#f9b700"/><rect x="2.8" y="10.7" width="10.4" height="1.8" rx="0.6" fill="#f9b700"/></svg>
<div class="b" style="left:630px;top:430.9px;width:28px;height:19px;background:#47a947;border-radius:3px;"></div>
<svg class="b" style="left:633.5px;top:435.09999999999997px;" width="10" height="11" viewBox="0 0 10 11"><path d="M5 10.5 V2 M1.2 5.6 L5 1.6 L8.8 5.6" fill="none" stroke="#fff" stroke-width="2"/></svg>
<div class="t" style="left:645.5px;top:433.94px;font-size:13.3px;color:#fff;-webkit-text-stroke:0.45px #fff;">3</div>
<svg class="b" style="left:695.5px;top:433.9px;" width="13" height="13" viewBox="0 0 13 13"><circle cx="6.5" cy="6.5" r="5.8" fill="none" stroke="#52b352" stroke-width="1.1"/><path d="M4 6.7 L5.8 8.4 L9 5" fill="none" stroke="#52b352" stroke-width="1.1"/></svg>
<div class="t" style="left:711.4px;top:436.14px;font-size:9.4px;color:#52b352;-webkit-text-stroke:0.1px #52b352;letter-spacing:0.3px;">AI Overview</div>
<div class="b" style="left:880px;top:437.4px;width:6px;height:6px;background:#000;border-radius:50%;"></div>
<div class="b" style="left:980px;top:437.4px;width:6px;height:6px;background:#000;border-radius:50%;"></div>
<svg class="b" style="left:994.5px;top:435.9px;" width="8" height="9" viewBox="0 0 8 9"><path d="M4 9 V1.2 M0.8 4.2 L4 1 L7.2 4.2" fill="none" stroke="#159415" stroke-width="1.4"/></svg>
<div class="t" style="left:1004.5px;top:434.42px;font-size:12.5px;color:#159415;">1</div>
<svg class="b" style="left:1019.5px;top:435.9px;" width="8" height="9" viewBox="0 0 8 9"><path d="M4 9 V1.2 M0.8 4.2 L4 1 L7.2 4.2" fill="none" stroke="#159415" stroke-width="1.4"/></svg>
<div class="t" style="left:1029.5px;top:434.42px;font-size:12.5px;color:#159415;">3</div>
<div class="t" style="left:923.5px;width:400px;text-align:center;top:434.84px;font-size:12.0px;color:#1a1a1a;">01 Ago</div>
<div class="t" style="left:1056px;width:400px;text-align:center;top:434.42px;font-size:12.5px;color:#1a1a1a;">1</div>
<div class="t" style="left:1156.5px;width:400px;text-align:center;top:434.42px;font-size:12.5px;color:#1a1a1a;">4</div>
<div class="t" style="left:1332.5px;width:200px;text-align:center;top:434.42px;font-size:12.5px;color:#1a1a1a;">44<span style="display:inline-block;width:11px"></span><span style="color:#159415">(<span style="display:inline-block;width:9px;height:9px;position:relative;"><svg style="position:absolute;left:1px;top:0px" width="8" height="9" viewBox="0 0 8 9"><path d="M4 9 V1.2 M0.8 4.2 L4 1 L7.2 4.2" fill="none" stroke="#159415" stroke-width="1.4"/></svg></span>&nbsp;43)</span></div>
<div class="t" style="left:1326.5px;width:400px;text-align:center;top:434.42px;font-size:12.5px;color:#1a1a1a;">10</div>
<div class="t" style="left:1401.5px;width:400px;text-align:center;top:434.42px;font-size:12.5px;color:#1a1a1a;">1,24 €</div>
<div class="b" style="left:39.2px;top:484.8px;width:18px;height:18px;border:1.5px solid #7a7a7a;border-radius:3px;box-sizing:border-box;background:#fff;"></div>
<svg class="b" style="left:84px;top:486.5px;" width="16" height="15" viewBox="0 0 16 15"><path d="M8 13.6 L2.2 8 C0.4 6.2 0.6 3.2 2.6 1.9 C4.6 0.6 6.8 1.4 8 3.3 C9.2 1.4 11.4 0.6 13.4 1.9 C15.4 3.2 15.6 6.2 13.8 8 Z" fill="none" stroke="#111" stroke-width="1.6" stroke-linejoin="round"/></svg>
<div class="t" style="left:120.2px;top:486.50px;font-size:14.05px;color:#4a89e6;-webkit-text-stroke:0.2px #4a89e6;">comprar reseñas google opiniones<svg style="display:inline-block;vertical-align:-1px;margin-left:5px;-webkit-text-stroke:0" width="13" height="13" viewBox="0 0 13 13"><path d="M3.2 2.7 A2.8 2.7 0 0 1 8.8 2.7 Z" fill="#f00"/><path d="M2.3 3.4 H9.7 V9.8 C9.7 11 8.6 11.8 6 11.8 C3.4 11.8 2.3 11 2.3 9.8 Z" fill="#f00"/><path d="M2.6 4.6 L0.8 2.9 M9.4 4.6 L11.2 2.9 M2.5 7.3 H0.2 M9.5 7.3 H11.8 M2.6 10 L1 11.9 M9.4 10 L11 11.9" stroke="#f00" stroke-width="1.3" stroke-linecap="round"/><path d="M6 3.6 V11.6" stroke="#fff" stroke-width="0.6"/></svg></div>
<svg class="b" style="left:383.5px;top:487.5px;" width="13" height="13" viewBox="0 0 13 13"><clipPath id="ff5"><circle cx="6.5" cy="6.5" r="6.3"/></clipPath><g clip-path="url(#ff5)"><rect width="13" height="13" fill="#e0102a"/><rect y="4.1" width="13" height="4.8" fill="#ffd43b"/></g></svg>
<div class="t" style="left:402px;top:487.30px;font-size:13.35px;color:#1a1a1a;-webkit-text-stroke:0.3px #1a1a1a;">España</div>
<svg class="b" style="left:479.5px;top:487.0px;" width="15" height="14" viewBox="0 0 15 14"><rect x="1" y="1" width="13" height="9" rx="1.3" fill="none" stroke="#f6ad2e" stroke-width="1.6"/><path d="M7.5 10 V12.5 M4.5 12.8 H10.5" stroke="#f6ad2e" stroke-width="1.6"/></svg>
<div class="t" style="left:555.3px;top:488.02px;font-size:12.5px;color:#1a1a1a;">1</div>
<svg class="b" style="left:566px;top:487.5px;" width="16" height="13" viewBox="0 0 16 13"><path d="M8 1.5 L10.8 6 L14.8 3.8 L13.2 9.8 H2.8 L1.2 3.8 L5.2 6 Z" fill="#f9b700"/><circle cx="8" cy="1.6" r="1.3" fill="#f9b700"/><circle cx="1.2" cy="3.8" r="1.2" fill="#f9b700"/><circle cx="14.8" cy="3.8" r="1.2" fill="#f9b700"/><rect x="2.8" y="10.7" width="10.4" height="1.8" rx="0.6" fill="#f9b700"/></svg>
<div class="b" style="left:630px;top:484.5px;width:28px;height:19px;background:#47a947;border-radius:3px;"></div>
<svg class="b" style="left:633.5px;top:488.7px;" width="10" height="11" viewBox="0 0 10 11"><path d="M5 10.5 V2 M1.2 5.6 L5 1.6 L8.8 5.6" fill="none" stroke="#fff" stroke-width="2"/></svg>
<div class="t" style="left:645.5px;top:487.54px;font-size:13.3px;color:#fff;-webkit-text-stroke:0.45px #fff;">5</div>
<div class="b" style="left:880px;top:491.0px;width:6px;height:6px;background:#000;border-radius:50%;"></div>
<div class="b" style="left:985px;top:491.0px;width:6px;height:6px;background:#000;border-radius:50%;"></div>
<div class="b" style="left:1000px;top:491.0px;width:6px;height:6px;background:#000;border-radius:50%;"></div>
<svg class="b" style="left:1014.5px;top:489.5px;" width="8" height="9" viewBox="0 0 8 9"><path d="M4 9 V1.2 M0.8 4.2 L4 1 L7.2 4.2" fill="none" stroke="#159415" stroke-width="1.4"/></svg>
<div class="t" style="left:1026.5px;top:488.02px;font-size:12.5px;color:#159415;">5</div>
<div class="t" style="left:923.5px;width:400px;text-align:center;top:488.44px;font-size:12.0px;color:#1a1a1a;">05 Ago</div>
<div class="t" style="left:1056px;width:400px;text-align:center;top:488.02px;font-size:12.5px;color:#1a1a1a;">1</div>
<div class="t" style="left:1156.5px;width:400px;text-align:center;top:488.02px;font-size:12.5px;color:#1a1a1a;">6</div>
<div class="t" style="left:1332.5px;width:200px;text-align:center;top:488.02px;font-size:12.5px;color:#1a1a1a;">48<span style="display:inline-block;width:11px"></span><span style="color:#159415">(<span style="display:inline-block;width:9px;height:9px;position:relative;"><svg style="position:absolute;left:1px;top:0px" width="8" height="9" viewBox="0 0 8 9"><path d="M4 9 V1.2 M0.8 4.2 L4 1 L7.2 4.2" fill="none" stroke="#159415" stroke-width="1.4"/></svg></span>&nbsp;47)</span></div>
<div class="t" style="left:1326.5px;width:400px;text-align:center;top:488.02px;font-size:12.5px;color:#1a1a1a;">20</div>
<div class="t" style="left:1401.5px;width:400px;text-align:center;top:488.02px;font-size:12.5px;color:#1a1a1a;">0 €</div>
<div class="b" style="left:39.2px;top:538.3999999999999px;width:18px;height:18px;border:1.5px solid #7a7a7a;border-radius:3px;box-sizing:border-box;background:#fff;"></div>
<svg class="b" style="left:84px;top:540.0999999999999px;" width="16" height="15" viewBox="0 0 16 15"><path d="M8 13.6 L2.2 8 C0.4 6.2 0.6 3.2 2.6 1.9 C4.6 0.6 6.8 1.4 8 3.3 C9.2 1.4 11.4 0.6 13.4 1.9 C15.4 3.2 15.6 6.2 13.8 8 Z" fill="none" stroke="#111" stroke-width="1.6" stroke-linejoin="round"/></svg>
<div class="t" style="left:120.2px;top:540.10px;font-size:14.05px;color:#4a89e6;-webkit-text-stroke:0.2px #4a89e6;">don reseñas</div>
<svg class="b" style="left:383.5px;top:541.0999999999999px;" width="13" height="13" viewBox="0 0 13 13"><clipPath id="ff6"><circle cx="6.5" cy="6.5" r="6.3"/></clipPath><g clip-path="url(#ff6)"><rect width="13" height="13" fill="#e0102a"/><rect y="4.1" width="13" height="4.8" fill="#ffd43b"/></g></svg>
<div class="t" style="left:402px;top:540.90px;font-size:13.35px;color:#1a1a1a;-webkit-text-stroke:0.3px #1a1a1a;">España</div>
<svg class="b" style="left:483.0px;top:541.0999999999999px;" width="9" height="13" viewBox="0 0 9 13"><rect x="0.9" y="0.9" width="7.2" height="11.2" rx="1.5" fill="none" stroke="#3a78e0" stroke-width="1.5"/><path d="M3.3 10 H5.7" stroke="#3a78e0" stroke-width="1.4"/></svg>
<div class="t" style="left:555.3px;top:541.62px;font-size:12.5px;color:#1a1a1a;">1</div>
<svg class="b" style="left:566px;top:541.0999999999999px;" width="16" height="13" viewBox="0 0 16 13"><path d="M8 1.5 L10.8 6 L14.8 3.8 L13.2 9.8 H2.8 L1.2 3.8 L5.2 6 Z" fill="#f9b700"/><circle cx="8" cy="1.6" r="1.3" fill="#f9b700"/><circle cx="1.2" cy="3.8" r="1.2" fill="#f9b700"/><circle cx="14.8" cy="3.8" r="1.2" fill="#f9b700"/><rect x="2.8" y="10.7" width="10.4" height="1.8" rx="0.6" fill="#f9b700"/></svg>
<div class="b" style="left:641px;top:544.5999999999999px;width:6px;height:6px;background:#000;border-radius:50%;"></div>
<div class="b" style="left:880px;top:544.5999999999999px;width:6px;height:6px;background:#000;border-radius:50%;"></div>
<div class="b" style="left:991px;top:544.5999999999999px;width:6px;height:6px;background:#000;border-radius:50%;"></div>
<div class="b" style="left:1006px;top:544.5999999999999px;width:6px;height:6px;background:#000;border-radius:50%;"></div>
<div class="b" style="left:1021px;top:544.5999999999999px;width:6px;height:6px;background:#000;border-radius:50%;"></div>
<div class="t" style="left:923.5px;width:400px;text-align:center;top:542.04px;font-size:12.0px;color:#1a1a1a;">25 Abr</div>
<div class="t" style="left:1056px;width:400px;text-align:center;top:541.62px;font-size:12.5px;color:#1a1a1a;">1</div>
<div class="t" style="left:1156.5px;width:400px;text-align:center;top:541.62px;font-size:12.5px;color:#1a1a1a;">1</div>
<div class="t" style="left:1234.5px;width:400px;text-align:center;top:541.62px;font-size:12.5px;color:#1a1a1a;">1</div>
<div class="t" style="left:1326.5px;width:400px;text-align:center;top:541.62px;font-size:12.5px;color:#1a1a1a;">70</div>
<div class="t" style="left:1401.5px;width:400px;text-align:center;top:541.62px;font-size:12.5px;color:#1a1a1a;">10,71 €</div>
<div class="b" style="left:39.2px;top:591.9999999999999px;width:18px;height:18px;border:1.5px solid #7a7a7a;border-radius:3px;box-sizing:border-box;background:#fff;"></div>
<svg class="b" style="left:84px;top:593.6999999999999px;" width="16" height="15" viewBox="0 0 16 15"><path d="M8 13.6 L2.2 8 C0.4 6.2 0.6 3.2 2.6 1.9 C4.6 0.6 6.8 1.4 8 3.3 C9.2 1.4 11.4 0.6 13.4 1.9 C15.4 3.2 15.6 6.2 13.8 8 Z" fill="none" stroke="#111" stroke-width="1.6" stroke-linejoin="round"/></svg>
<div class="t" style="left:120.2px;top:593.70px;font-size:14.05px;color:#4a89e6;-webkit-text-stroke:0.2px #4a89e6;">don reseñas</div>
<svg class="b" style="left:383.5px;top:594.6999999999999px;" width="13" height="13" viewBox="0 0 13 13"><clipPath id="ff7"><circle cx="6.5" cy="6.5" r="6.3"/></clipPath><g clip-path="url(#ff7)"><rect width="13" height="13" fill="#e0102a"/><rect y="4.1" width="13" height="4.8" fill="#ffd43b"/></g></svg>
<div class="t" style="left:402px;top:594.50px;font-size:13.35px;color:#1a1a1a;-webkit-text-stroke:0.3px #1a1a1a;">España</div>
<svg class="b" style="left:479.5px;top:594.1999999999999px;" width="15" height="14" viewBox="0 0 15 14"><rect x="1" y="1" width="13" height="9" rx="1.3" fill="none" stroke="#f6ad2e" stroke-width="1.6"/><path d="M7.5 10 V12.5 M4.5 12.8 H10.5" stroke="#f6ad2e" stroke-width="1.6"/></svg>
<div class="t" style="left:555.3px;top:595.22px;font-size:12.5px;color:#1a1a1a;">1</div>
<svg class="b" style="left:566px;top:594.6999999999999px;" width="16" height="13" viewBox="0 0 16 13"><path d="M8 1.5 L10.8 6 L14.8 3.8 L13.2 9.8 H2.8 L1.2 3.8 L5.2 6 Z" fill="#f9b700"/><circle cx="8" cy="1.6" r="1.3" fill="#f9b700"/><circle cx="1.2" cy="3.8" r="1.2" fill="#f9b700"/><circle cx="14.8" cy="3.8" r="1.2" fill="#f9b700"/><rect x="2.8" y="10.7" width="10.4" height="1.8" rx="0.6" fill="#f9b700"/></svg>
<div class="b" style="left:641px;top:598.1999999999999px;width:6px;height:6px;background:#000;border-radius:50%;"></div>
<div class="b" style="left:880px;top:598.1999999999999px;width:6px;height:6px;background:#000;border-radius:50%;"></div>
<div class="b" style="left:991px;top:598.1999999999999px;width:6px;height:6px;background:#000;border-radius:50%;"></div>
<div class="b" style="left:1006px;top:598.1999999999999px;width:6px;height:6px;background:#000;border-radius:50%;"></div>
<div class="b" style="left:1021px;top:598.1999999999999px;width:6px;height:6px;background:#000;border-radius:50%;"></div>
<div class="t" style="left:923.5px;width:400px;text-align:center;top:595.64px;font-size:12.0px;color:#1a1a1a;">23 Abr</div>
<div class="t" style="left:1056px;width:400px;text-align:center;top:595.22px;font-size:12.5px;color:#1a1a1a;">1</div>
<div class="t" style="left:1156.5px;width:400px;text-align:center;top:595.22px;font-size:12.5px;color:#1a1a1a;">1</div>
<div class="t" style="left:1234.5px;width:400px;text-align:center;top:595.22px;font-size:12.5px;color:#1a1a1a;">1</div>
<div class="t" style="left:1326.5px;width:400px;text-align:center;top:595.22px;font-size:12.5px;color:#1a1a1a;">70</div>
<div class="t" style="left:1401.5px;width:400px;text-align:center;top:595.22px;font-size:12.5px;color:#1a1a1a;">10,71 €</div>
<div class="b" style="left:39.2px;top:645.5999999999999px;width:18px;height:18px;border:1.5px solid #7a7a7a;border-radius:3px;box-sizing:border-box;background:#fff;"></div>
<svg class="b" style="left:84px;top:647.3px;" width="16" height="15" viewBox="0 0 16 15"><path d="M8 13.6 L2.2 8 C0.4 6.2 0.6 3.2 2.6 1.9 C4.6 0.6 6.8 1.4 8 3.3 C9.2 1.4 11.4 0.6 13.4 1.9 C15.4 3.2 15.6 6.2 13.8 8 Z" fill="none" stroke="#111" stroke-width="1.6" stroke-linejoin="round"/></svg>
<div class="t" style="left:120.2px;top:647.30px;font-size:14.05px;color:#4a89e6;-webkit-text-stroke:0.2px #4a89e6;">comprar reseñas google<svg style="display:inline-block;vertical-align:-1px;margin-left:5px;-webkit-text-stroke:0" width="13" height="13" viewBox="0 0 13 13"><path d="M3.2 2.7 A2.8 2.7 0 0 1 8.8 2.7 Z" fill="#f00"/><path d="M2.3 3.4 H9.7 V9.8 C9.7 11 8.6 11.8 6 11.8 C3.4 11.8 2.3 11 2.3 9.8 Z" fill="#f00"/><path d="M2.6 4.6 L0.8 2.9 M9.4 4.6 L11.2 2.9 M2.5 7.3 H0.2 M9.5 7.3 H11.8 M2.6 10 L1 11.9 M9.4 10 L11 11.9" stroke="#f00" stroke-width="1.3" stroke-linecap="round"/><path d="M6 3.6 V11.6" stroke="#fff" stroke-width="0.6"/></svg></div>
<svg class="b" style="left:383.5px;top:648.3px;" width="13" height="13" viewBox="0 0 13 13"><clipPath id="ff8"><circle cx="6.5" cy="6.5" r="6.3"/></clipPath><g clip-path="url(#ff8)"><rect width="13" height="13" fill="#e0102a"/><rect y="4.1" width="13" height="4.8" fill="#ffd43b"/></g></svg>
<div class="t" style="left:402px;top:648.10px;font-size:13.35px;color:#1a1a1a;-webkit-text-stroke:0.3px #1a1a1a;">España</div>
<svg class="b" style="left:479.5px;top:647.8px;" width="15" height="14" viewBox="0 0 15 14"><rect x="1" y="1" width="13" height="9" rx="1.3" fill="none" stroke="#f6ad2e" stroke-width="1.6"/><path d="M7.5 10 V12.5 M4.5 12.8 H10.5" stroke="#f6ad2e" stroke-width="1.6"/></svg>
<div class="t" style="left:555.3px;top:648.82px;font-size:12.5px;color:#1a1a1a;">1</div>
<svg class="b" style="left:566px;top:648.3px;" width="16" height="13" viewBox="0 0 16 13"><path d="M8 1.5 L10.8 6 L14.8 3.8 L13.2 9.8 H2.8 L1.2 3.8 L5.2 6 Z" fill="#f9b700"/><circle cx="8" cy="1.6" r="1.3" fill="#f9b700"/><circle cx="1.2" cy="3.8" r="1.2" fill="#f9b700"/><circle cx="14.8" cy="3.8" r="1.2" fill="#f9b700"/><rect x="2.8" y="10.7" width="10.4" height="1.8" rx="0.6" fill="#f9b700"/></svg>
<div class="b" style="left:630px;top:645.3px;width:28px;height:19px;background:#47a947;border-radius:3px;"></div>
<svg class="b" style="left:633.5px;top:649.5px;" width="10" height="11" viewBox="0 0 10 11"><path d="M5 10.5 V2 M1.2 5.6 L5 1.6 L8.8 5.6" fill="none" stroke="#fff" stroke-width="2"/></svg>
<div class="t" style="left:645.5px;top:648.34px;font-size:13.3px;color:#fff;-webkit-text-stroke:0.45px #fff;">2</div>
<div class="b" style="left:880px;top:651.8px;width:6px;height:6px;background:#000;border-radius:50%;"></div>
<div class="b" style="left:985px;top:651.8px;width:6px;height:6px;background:#000;border-radius:50%;"></div>
<div class="b" style="left:1000px;top:651.8px;width:6px;height:6px;background:#000;border-radius:50%;"></div>
<svg class="b" style="left:1014.5px;top:650.3px;" width="8" height="9" viewBox="0 0 8 9"><path d="M4 9 V1.2 M0.8 4.2 L4 1 L7.2 4.2" fill="none" stroke="#159415" stroke-width="1.4"/></svg>
<div class="t" style="left:1026.5px;top:648.82px;font-size:12.5px;color:#159415;">2</div>
<div class="t" style="left:923.5px;width:400px;text-align:center;top:649.24px;font-size:12.0px;color:#1a1a1a;">04 Ago</div>
<div class="t" style="left:1056px;width:400px;text-align:center;top:648.82px;font-size:12.5px;color:#1a1a1a;">1</div>
<div class="t" style="left:1156.5px;width:400px;text-align:center;top:648.82px;font-size:12.5px;color:#1a1a1a;">3</div>
<div class="t" style="left:1332.5px;width:200px;text-align:center;top:648.82px;font-size:12.5px;color:#1a1a1a;">29<span style="display:inline-block;width:11px"></span><span style="color:#159415">(<span style="display:inline-block;width:9px;height:9px;position:relative;"><svg style="position:absolute;left:1px;top:0px" width="8" height="9" viewBox="0 0 8 9"><path d="M4 9 V1.2 M0.8 4.2 L4 1 L7.2 4.2" fill="none" stroke="#159415" stroke-width="1.4"/></svg></span>&nbsp;28)</span></div>
<div class="t" style="left:1326.5px;width:400px;text-align:center;top:648.82px;font-size:12.5px;color:#1a1a1a;">0</div>
<div class="t" style="left:1401.5px;width:400px;text-align:center;top:648.82px;font-size:12.5px;color:#1a1a1a;">0 €</div>
<div class="b" style="left:39.2px;top:699.1999999999998px;width:18px;height:18px;border:1.5px solid #7a7a7a;border-radius:3px;box-sizing:border-box;background:#fff;"></div>
<svg class="b" style="left:84px;top:700.8999999999999px;" width="16" height="15" viewBox="0 0 16 15"><path d="M8 13.6 L2.2 8 C0.4 6.2 0.6 3.2 2.6 1.9 C4.6 0.6 6.8 1.4 8 3.3 C9.2 1.4 11.4 0.6 13.4 1.9 C15.4 3.2 15.6 6.2 13.8 8 Z" fill="none" stroke="#111" stroke-width="1.6" stroke-linejoin="round"/></svg>
<div class="t" style="left:120.2px;top:700.90px;font-size:14.05px;color:#4a89e6;-webkit-text-stroke:0.2px #4a89e6;">comprar reseñas<svg style="display:inline-block;vertical-align:-1px;margin-left:5px;-webkit-text-stroke:0" width="13" height="13" viewBox="0 0 13 13"><path d="M3.2 2.7 A2.8 2.7 0 0 1 8.8 2.7 Z" fill="#f00"/><path d="M2.3 3.4 H9.7 V9.8 C9.7 11 8.6 11.8 6 11.8 C3.4 11.8 2.3 11 2.3 9.8 Z" fill="#f00"/><path d="M2.6 4.6 L0.8 2.9 M9.4 4.6 L11.2 2.9 M2.5 7.3 H0.2 M9.5 7.3 H11.8 M2.6 10 L1 11.9 M9.4 10 L11 11.9" stroke="#f00" stroke-width="1.3" stroke-linecap="round"/><path d="M6 3.6 V11.6" stroke="#fff" stroke-width="0.6"/></svg></div>
<svg class="b" style="left:383.5px;top:701.8999999999999px;" width="13" height="13" viewBox="0 0 13 13"><clipPath id="ff9"><circle cx="6.5" cy="6.5" r="6.3"/></clipPath><g clip-path="url(#ff9)"><rect width="13" height="13" fill="#e0102a"/><rect y="4.1" width="13" height="4.8" fill="#ffd43b"/></g></svg>
<div class="t" style="left:402px;top:701.70px;font-size:13.35px;color:#1a1a1a;-webkit-text-stroke:0.3px #1a1a1a;">España</div>
<svg class="b" style="left:479.5px;top:701.3999999999999px;" width="15" height="14" viewBox="0 0 15 14"><rect x="1" y="1" width="13" height="9" rx="1.3" fill="none" stroke="#f6ad2e" stroke-width="1.6"/><path d="M7.5 10 V12.5 M4.5 12.8 H10.5" stroke="#f6ad2e" stroke-width="1.6"/></svg>
<div class="t" style="left:555.3px;top:702.42px;font-size:12.5px;color:#1a1a1a;">1</div>
<svg class="b" style="left:566px;top:701.8999999999999px;" width="16" height="13" viewBox="0 0 16 13"><path d="M8 1.5 L10.8 6 L14.8 3.8 L13.2 9.8 H2.8 L1.2 3.8 L5.2 6 Z" fill="#f9b700"/><circle cx="8" cy="1.6" r="1.3" fill="#f9b700"/><circle cx="1.2" cy="3.8" r="1.2" fill="#f9b700"/><circle cx="14.8" cy="3.8" r="1.2" fill="#f9b700"/><rect x="2.8" y="10.7" width="10.4" height="1.8" rx="0.6" fill="#f9b700"/></svg>
<div class="b" style="left:630px;top:698.8999999999999px;width:28px;height:19px;background:#47a947;border-radius:3px;"></div>
<svg class="b" style="left:633.5px;top:703.0999999999999px;" width="10" height="11" viewBox="0 0 10 11"><path d="M5 10.5 V2 M1.2 5.6 L5 1.6 L8.8 5.6" fill="none" stroke="#fff" stroke-width="2"/></svg>
<div class="t" style="left:645.5px;top:701.94px;font-size:13.3px;color:#fff;-webkit-text-stroke:0.45px #fff;">1</div>
<div class="b" style="left:880px;top:705.3999999999999px;width:6px;height:6px;background:#000;border-radius:50%;"></div>
<div class="b" style="left:985px;top:705.3999999999999px;width:6px;height:6px;background:#000;border-radius:50%;"></div>
<div class="b" style="left:1000px;top:705.3999999999999px;width:6px;height:6px;background:#000;border-radius:50%;"></div>
<svg class="b" style="left:1014.5px;top:703.8999999999999px;" width="8" height="9" viewBox="0 0 8 9"><path d="M4 9 V1.2 M0.8 4.2 L4 1 L7.2 4.2" fill="none" stroke="#159415" stroke-width="1.4"/></svg>
<div class="t" style="left:1026.5px;top:702.42px;font-size:12.5px;color:#159415;">2</div>
<div class="t" style="left:923.5px;width:400px;text-align:center;top:702.84px;font-size:12.0px;color:#1a1a1a;">19 Jul</div>
<div class="t" style="left:1056px;width:400px;text-align:center;top:702.42px;font-size:12.5px;color:#1a1a1a;">1</div>
<div class="t" style="left:1156.5px;width:400px;text-align:center;top:702.42px;font-size:12.5px;color:#1a1a1a;">3</div>
<div class="t" style="left:1332.5px;width:200px;text-align:center;top:702.42px;font-size:12.5px;color:#1a1a1a;">52<span style="display:inline-block;width:11px"></span><span style="color:#159415">(<span style="display:inline-block;width:9px;height:9px;position:relative;"><svg style="position:absolute;left:1px;top:0px" width="8" height="9" viewBox="0 0 8 9"><path d="M4 9 V1.2 M0.8 4.2 L4 1 L7.2 4.2" fill="none" stroke="#159415" stroke-width="1.4"/></svg></span>&nbsp;51)</span></div>
<div class="t" style="left:1326.5px;width:400px;text-align:center;top:702.42px;font-size:12.5px;color:#1a1a1a;">90</div>
<div class="t" style="left:1401.5px;width:400px;text-align:center;top:702.42px;font-size:12.5px;color:#1a1a1a;">4,2 €</div>
<div class="b" style="left:39.2px;top:752.8px;width:18px;height:18px;border:1.5px solid #7a7a7a;border-radius:3px;box-sizing:border-box;background:#fff;"></div>
<svg class="b" style="left:84px;top:754.5px;" width="16" height="15" viewBox="0 0 16 15"><path d="M8 13.6 L2.2 8 C0.4 6.2 0.6 3.2 2.6 1.9 C4.6 0.6 6.8 1.4 8 3.3 C9.2 1.4 11.4 0.6 13.4 1.9 C15.4 3.2 15.6 6.2 13.8 8 Z" fill="none" stroke="#111" stroke-width="1.6" stroke-linejoin="round"/></svg>
<div class="t" style="left:120.2px;top:754.50px;font-size:14.05px;color:#4a89e6;-webkit-text-stroke:0.2px #4a89e6;">comprar reseñas de google<svg style="display:inline-block;vertical-align:-1px;margin-left:5px;-webkit-text-stroke:0" width="13" height="13" viewBox="0 0 13 13"><path d="M3.2 2.7 A2.8 2.7 0 0 1 8.8 2.7 Z" fill="#f00"/><path d="M2.3 3.4 H9.7 V9.8 C9.7 11 8.6 11.8 6 11.8 C3.4 11.8 2.3 11 2.3 9.8 Z" fill="#f00"/><path d="M2.6 4.6 L0.8 2.9 M9.4 4.6 L11.2 2.9 M2.5 7.3 H0.2 M9.5 7.3 H11.8 M2.6 10 L1 11.9 M9.4 10 L11 11.9" stroke="#f00" stroke-width="1.3" stroke-linecap="round"/><path d="M6 3.6 V11.6" stroke="#fff" stroke-width="0.6"/></svg></div>
<svg class="b" style="left:383.5px;top:755.5px;" width="13" height="13" viewBox="0 0 13 13"><clipPath id="ff10"><circle cx="6.5" cy="6.5" r="6.3"/></clipPath><g clip-path="url(#ff10)"><rect width="13" height="13" fill="#e0102a"/><rect y="4.1" width="13" height="4.8" fill="#ffd43b"/></g></svg>
<div class="t" style="left:402px;top:755.30px;font-size:13.35px;color:#1a1a1a;-webkit-text-stroke:0.3px #1a1a1a;">España</div>
<svg class="b" style="left:479.5px;top:755.0px;" width="15" height="14" viewBox="0 0 15 14"><rect x="1" y="1" width="13" height="9" rx="1.3" fill="none" stroke="#f6ad2e" stroke-width="1.6"/><path d="M7.5 10 V12.5 M4.5 12.8 H10.5" stroke="#f6ad2e" stroke-width="1.6"/></svg>
<div class="t" style="left:555.3px;top:756.02px;font-size:12.5px;color:#1a1a1a;">1</div>
<svg class="b" style="left:566px;top:755.5px;" width="16" height="13" viewBox="0 0 16 13"><path d="M8 1.5 L10.8 6 L14.8 3.8 L13.2 9.8 H2.8 L1.2 3.8 L5.2 6 Z" fill="#f9b700"/><circle cx="8" cy="1.6" r="1.3" fill="#f9b700"/><circle cx="1.2" cy="3.8" r="1.2" fill="#f9b700"/><circle cx="14.8" cy="3.8" r="1.2" fill="#f9b700"/><rect x="2.8" y="10.7" width="10.4" height="1.8" rx="0.6" fill="#f9b700"/></svg>
<div class="b" style="left:630px;top:752.5px;width:28px;height:19px;background:#47a947;border-radius:3px;"></div>
<svg class="b" style="left:633.5px;top:756.7px;" width="10" height="11" viewBox="0 0 10 11"><path d="M5 10.5 V2 M1.2 5.6 L5 1.6 L8.8 5.6" fill="none" stroke="#fff" stroke-width="2"/></svg>
<div class="t" style="left:645.5px;top:755.54px;font-size:13.3px;color:#fff;-webkit-text-stroke:0.45px #fff;">2</div>
<div class="b" style="left:880px;top:759.0px;width:6px;height:6px;background:#000;border-radius:50%;"></div>
<div class="b" style="left:980px;top:759.0px;width:6px;height:6px;background:#000;border-radius:50%;"></div>
<svg class="b" style="left:994.5px;top:757.5px;" width="8" height="9" viewBox="0 0 8 9"><path d="M4 9 V1.2 M0.8 4.2 L4 1 L7.2 4.2" fill="none" stroke="#159415" stroke-width="1.4"/></svg>
<div class="t" style="left:1004.5px;top:756.02px;font-size:12.5px;color:#159415;">1</div>
<svg class="b" style="left:1019.5px;top:757.5px;" width="8" height="9" viewBox="0 0 8 9"><path d="M4 9 V1.2 M0.8 4.2 L4 1 L7.2 4.2" fill="none" stroke="#159415" stroke-width="1.4"/></svg>
<div class="t" style="left:1029.5px;top:756.02px;font-size:12.5px;color:#159415;">2</div>
<div class="t" style="left:923.5px;width:400px;text-align:center;top:756.44px;font-size:12.0px;color:#1a1a1a;">01 Ago</div>
<div class="t" style="left:1056px;width:400px;text-align:center;top:756.02px;font-size:12.5px;color:#1a1a1a;">1</div>
<div class="t" style="left:1156.5px;width:400px;text-align:center;top:756.02px;font-size:12.5px;color:#1a1a1a;">3</div>
<div class="t" style="left:1332.5px;width:200px;text-align:center;top:756.02px;font-size:12.5px;color:#1a1a1a;">43<span style="display:inline-block;width:11px"></span><span style="color:#159415">(<span style="display:inline-block;width:9px;height:9px;position:relative;"><svg style="position:absolute;left:1px;top:0px" width="8" height="9" viewBox="0 0 8 9"><path d="M4 9 V1.2 M0.8 4.2 L4 1 L7.2 4.2" fill="none" stroke="#159415" stroke-width="1.4"/></svg></span>&nbsp;42)</span></div>
<div class="t" style="left:1326.5px;width:400px;text-align:center;top:756.02px;font-size:12.5px;color:#1a1a1a;">140</div>
<div class="t" style="left:1401.5px;width:400px;text-align:center;top:756.02px;font-size:12.5px;color:#1a1a1a;">1,8 €</div>
<div class="b" style="left:39.2px;top:806.3999999999999px;width:18px;height:18px;border:1.5px solid #7a7a7a;border-radius:3px;box-sizing:border-box;background:#fff;"></div>
<svg class="b" style="left:84px;top:808.0999999999999px;" width="16" height="15" viewBox="0 0 16 15"><path d="M8 13.6 L2.2 8 C0.4 6.2 0.6 3.2 2.6 1.9 C4.6 0.6 6.8 1.4 8 3.3 C9.2 1.4 11.4 0.6 13.4 1.9 C15.4 3.2 15.6 6.2 13.8 8 Z" fill="none" stroke="#111" stroke-width="1.6" stroke-linejoin="round"/></svg>
<div class="t" style="left:120.2px;top:808.10px;font-size:14.05px;color:#4a89e6;-webkit-text-stroke:0.2px #4a89e6;">compra reseñas google<svg style="display:inline-block;vertical-align:-1px;margin-left:5px;-webkit-text-stroke:0" width="13" height="13" viewBox="0 0 13 13"><path d="M3.2 2.7 A2.8 2.7 0 0 1 8.8 2.7 Z" fill="#f00"/><path d="M2.3 3.4 H9.7 V9.8 C9.7 11 8.6 11.8 6 11.8 C3.4 11.8 2.3 11 2.3 9.8 Z" fill="#f00"/><path d="M2.6 4.6 L0.8 2.9 M9.4 4.6 L11.2 2.9 M2.5 7.3 H0.2 M9.5 7.3 H11.8 M2.6 10 L1 11.9 M9.4 10 L11 11.9" stroke="#f00" stroke-width="1.3" stroke-linecap="round"/><path d="M6 3.6 V11.6" stroke="#fff" stroke-width="0.6"/></svg></div>
<svg class="b" style="left:383.5px;top:809.0999999999999px;" width="13" height="13" viewBox="0 0 13 13"><clipPath id="ff11"><circle cx="6.5" cy="6.5" r="6.3"/></clipPath><g clip-path="url(#ff11)"><rect width="13" height="13" fill="#e0102a"/><rect y="4.1" width="13" height="4.8" fill="#ffd43b"/></g></svg>
<div class="t" style="left:402px;top:808.90px;font-size:13.35px;color:#1a1a1a;-webkit-text-stroke:0.3px #1a1a1a;">España</div>
<svg class="b" style="left:479.5px;top:808.5999999999999px;" width="15" height="14" viewBox="0 0 15 14"><rect x="1" y="1" width="13" height="9" rx="1.3" fill="none" stroke="#f6ad2e" stroke-width="1.6"/><path d="M7.5 10 V12.5 M4.5 12.8 H10.5" stroke="#f6ad2e" stroke-width="1.6"/></svg>
<div class="t" style="left:555.3px;top:809.62px;font-size:12.5px;color:#1a1a1a;">1</div>
<svg class="b" style="left:566px;top:809.0999999999999px;" width="16" height="13" viewBox="0 0 16 13"><path d="M8 1.5 L10.8 6 L14.8 3.8 L13.2 9.8 H2.8 L1.2 3.8 L5.2 6 Z" fill="#f9b700"/><circle cx="8" cy="1.6" r="1.3" fill="#f9b700"/><circle cx="1.2" cy="3.8" r="1.2" fill="#f9b700"/><circle cx="14.8" cy="3.8" r="1.2" fill="#f9b700"/><rect x="2.8" y="10.7" width="10.4" height="1.8" rx="0.6" fill="#f9b700"/></svg>
<div class="b" style="left:630px;top:806.0999999999999px;width:28px;height:19px;background:#47a947;border-radius:3px;"></div>
<svg class="b" style="left:633.5px;top:810.3px;" width="10" height="11" viewBox="0 0 10 11"><path d="M5 10.5 V2 M1.2 5.6 L5 1.6 L8.8 5.6" fill="none" stroke="#fff" stroke-width="2"/></svg>
<div class="t" style="left:645.5px;top:809.14px;font-size:13.3px;color:#fff;-webkit-text-stroke:0.45px #fff;">3</div>
<div class="b" style="left:880px;top:812.5999999999999px;width:6px;height:6px;background:#000;border-radius:50%;"></div>
<div class="b" style="left:980px;top:812.5999999999999px;width:6px;height:6px;background:#000;border-radius:50%;"></div>
<svg class="b" style="left:994.5px;top:811.0999999999999px;" width="8" height="9" viewBox="0 0 8 9"><path d="M4 9 V1.2 M0.8 4.2 L4 1 L7.2 4.2" fill="none" stroke="#159415" stroke-width="1.4"/></svg>
<div class="t" style="left:1004.5px;top:809.62px;font-size:12.5px;color:#159415;">1</div>
<svg class="b" style="left:1019.5px;top:811.0999999999999px;" width="8" height="9" viewBox="0 0 8 9"><path d="M4 9 V1.2 M0.8 4.2 L4 1 L7.2 4.2" fill="none" stroke="#159415" stroke-width="1.4"/></svg>
<div class="t" style="left:1029.5px;top:809.62px;font-size:12.5px;color:#159415;">3</div>
<div class="t" style="left:923.5px;width:400px;text-align:center;top:810.04px;font-size:12.0px;color:#1a1a1a;">01 Ago</div>
<div class="t" style="left:1056px;width:400px;text-align:center;top:809.62px;font-size:12.5px;color:#1a1a1a;">1</div>
<div class="t" style="left:1156.5px;width:400px;text-align:center;top:809.62px;font-size:12.5px;color:#1a1a1a;">4</div>
<div class="t" style="left:1332.5px;width:200px;text-align:center;top:809.62px;font-size:12.5px;color:#1a1a1a;">56<span style="display:inline-block;width:11px"></span><span style="color:#159415">(<span style="display:inline-block;width:9px;height:9px;position:relative;"><svg style="position:absolute;left:1px;top:0px" width="8" height="9" viewBox="0 0 8 9"><path d="M4 9 V1.2 M0.8 4.2 L4 1 L7.2 4.2" fill="none" stroke="#159415" stroke-width="1.4"/></svg></span>&nbsp;55)</span></div>
<div class="t" style="left:1326.5px;width:400px;text-align:center;top:809.62px;font-size:12.5px;color:#1a1a1a;">0</div>
<div class="t" style="left:1401.5px;width:400px;text-align:center;top:809.62px;font-size:12.5px;color:#1a1a1a;">0 €</div>
</div>
<div class="b" style="left:1631px;top:250px;width:19px;height:589px;background:#fafafa;"></div>
<svg class="b" style="left:1634px;top:259px;" width="13" height="7.5" viewBox="0 0 13 7.5"><path d="M6.5 0 L13 7.5 H0 Z" fill="#8a8a8a"/></svg>
<div class="b" style="left:1635px;top:274px;width:11px;height:191px;background:#8a8a8a;border-radius:6px;"></div>
<div class="b" style="left:22px;top:839px;width:1628px;height:19px;background:#fafafa;"></div>
<svg class="b" style="left:29px;top:842px;" width="7.5" height="13" viewBox="0 0 7.5 13"><path d="M7.5 0 V13 L0 6.5 Z" fill="#8a8a8a"/></svg>
<div class="b" style="left:45px;top:843px;width:723px;height:11px;background:#8a8a8a;border-radius:6px;"></div>
<div class="t" style="left:636px;width:400px;text-align:center;top:868.53px;font-size:12.36px;color:#777;">Mostrando registros del 1 al 31 de un total de 31 registros</div>
<div class="b" style="left:1593px;top:805.5px;width:57px;height:56.5px;background:#1d6ff2;border-radius:50%;box-shadow:0 1px 4px rgba(0,0,0,.12);"></div>
<svg class="b" style="left:1606px;top:822px;" width="30" height="27" viewBox="0 0 30 27"><path d="M1.9 4.4 L26.75 1.8 L28 17.6 L19 19.1 L16 23.75 L12 19.5 L3.1 21 Z" fill="#fff"/></svg>
<script>
</script>
</body></html>
